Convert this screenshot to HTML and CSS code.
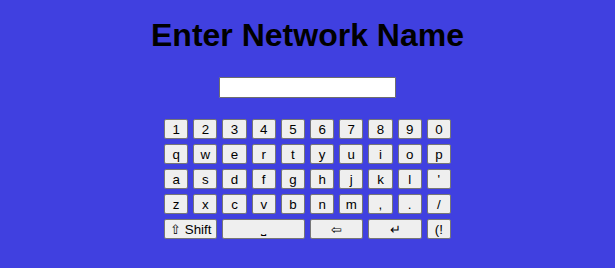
FILE: index.html
```html
<!DOCTYPE html>
<html>
<head>
  <title>Enter Network Name</title>
  <meta name="viewport" content="width=device-width, initial-scale=1">
  <link rel="stylesheet" href="styles.css">
</head>
<body>
  <div class="screen">
    <h1>Enter Network Name</h1>
    <input type="text" id="ssid" class="ssid-input">
    <div class="keyboard">
      <button>1</button><button>2</button><button>3</button><button>4</button><button>5</button>
      <button>6</button><button>7</button><button>8</button><button>9</button><button>0</button>
      <button>q</button><button>w</button><button>e</button><button>r</button><button>t</button>
      <button>y</button><button>u</button><button>i</button><button>o</button><button>p</button>
      <button>a</button><button>s</button><button>d</button><button>f</button><button>g</button>
      <button>h</button><button>j</button><button>k</button><button>l</button><button>'</button>
      <button>z</button><button>x</button><button>c</button><button>v</button><button>b</button>
      <button>n</button><button>m</button><button>,</button><button>.</button><button>/</button>
      <button class="wide">⇧ Shift</button>
      <button class="space">⎵</button>
      <button class="wide">⇦</button>
      <button class="wide">↵</button>
      <button>(!</button>
    </div>
  </div>
</body>
</html>
```

FILE: styles.css
```css
body {
  margin: 0;
  background: #4040e0;
  font-family: "Liberation Sans", Arial, sans-serif;
}
.screen {
  display: flex;
  flex-direction: column;
  align-items: center;
  padding-top: 15px;
}
h1 {
  margin: 0;
  font-size: 32px;
  line-height: 40px;
  font-weight: bold;
  color: #000;
}
.ssid-input {
  margin-top: 22px;
  width: 177px;
  height: 21px;
  box-sizing: border-box;
  border: 1px solid #6e6e6e;
  border-radius: 1px;
  background: #fff;
  padding: 1px 2px;
  font-size: 13px;
}
.keyboard {
  margin-top: 21px;
  display: grid;
  grid-template-columns: repeat(10, 24.2px);
  grid-auto-rows: 20px;
  gap: 5px 5px;
}
.keyboard button {
  padding: 0;
  font-family: "Liberation Sans", Arial, sans-serif;
  font-size: 13.33px;
  color: #000;
  background: #efefef;
  border: 1px solid #767676;
  border-radius: 2px;
}
.keyboard .wide {
  grid-column: span 2;
}
.keyboard .space {
  grid-column: span 3;
  padding-top: 2px;
}
```
